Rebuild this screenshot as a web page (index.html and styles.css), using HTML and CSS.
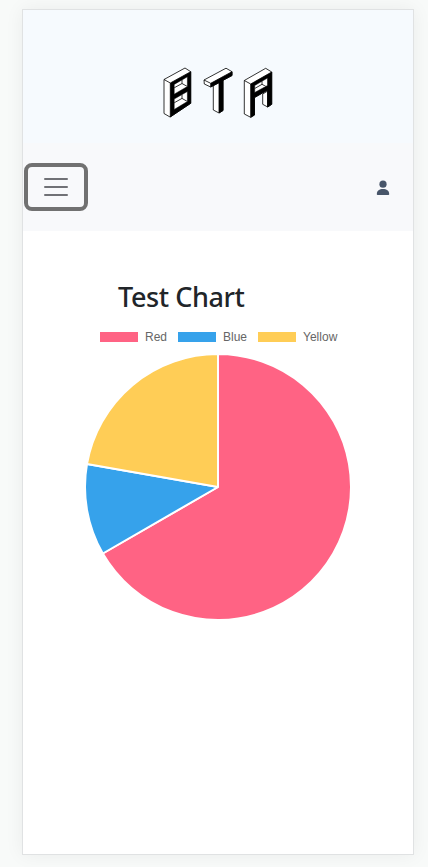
FILE: index.html
```html
<!DOCTYPE html>
<html lang="en">
<head>
<meta charset="utf-8">
<title>Test Chart</title>
<link rel="stylesheet" href="styles.css">
</head>
<body>
<div class="page">
  <header class="brand">
    <svg class="logo" viewBox="162 66 112 54" role="img" aria-label="BTA">
      <g class="edge">
        <path d="M164 79.5 185 68 190.7 71.7V103.3L170 117 164 113.5Z"/>
        <path d="M164 79.5 170.3 83"/>
        <path class="face" d="M170.3 83 190.7 71.7V103.3L170.3 117Z"/>
        <path class="hole" d="M174.2 84.4 187.4 76.8V86.5L174.2 94.2ZM174.2 99 187.4 91.5V101.5L174.2 109.5Z"/>
        <path d="M174.2 87.8 182 83.5 187.4 86.5M182 79.9V83.5M174.2 102.8 182 98.4 187.4 101.5M182 94.6V98.4"/>
        <path d="M213.3 83V110L219 113 223 110.5V79Z"/>
        <path d="M204 80 226 68.2 232 71.7V75.5L210.7 87 204.3 84Z"/>
        <path d="M204 80 210.7 83.3"/>
        <path class="face" d="M210.7 83.3 232 71.7V75.5L223 80.3V110.5L219 113V82.8L210.7 87Z"/>
        <path d="M262.7 94V104.3L267.7 107V91Z"/>
        <path d="M244.3 80.5 265.7 68.3 271.7 72V104.3L267.7 107V90L254.5 97.5V115L250.7 117.3 244.3 114Z"/>
        <path d="M244.3 80.5 250.7 84"/>
        <path class="face" d="M250.7 84 271.7 72V104.3L267.7 107V90L254.5 97.5V115L250.7 117.3Z"/>
        <path class="hole" d="M254.7 85.5 267.5 78V85.5L254.7 92.5Z"/>
        <path d="M254.7 88.5 262 84.3 266 86.5M262 81.2V84.3"/>
      </g>
    </svg>
  </header>
  <nav class="bar">
    <button class="toggle" aria-label="Menu"><span></span><span></span><span></span></button>
    <svg class="user" viewBox="0 0 14 15"><circle cx="7" cy="4.2" r="3.6"/><path d="M1.6 15Q.8 15 .8 14.2C.8 10.6 3.4 9 7 9S13.2 10.6 13.2 14.2Q13.2 15 12.4 15Z"/></svg>
  </nav>
  <main class="content">
    <h1 class="title">Test Chart</h1>
    <div class="legend">
      <span class="key"><i class="swatch red"></i>Red</span>
      <span class="key"><i class="swatch blue"></i>Blue</span>
      <span class="key"><i class="swatch yellow"></i>Yellow</span>
    </div>
    <svg class="pie" viewBox="-133 -133 266 266">
      <path class="red" d="M0 0V-133A133 133 0 1 1-115.18 66.5Z"/>
      <path class="blue" d="M0 0-115.18 66.5A133 133 0 0 1-130.98-23.1Z"/>
      <path class="yellow" d="M0 0-130.98-23.1A133 133 0 0 1 0-133Z"/>
    </svg>
  </main>
</div>
</body>
</html>
```
FILE: styles.css
```css
* { box-sizing: border-box; }
body {
  margin: 0;
  height: 867px;
  padding: 9px 14px 12px 22px;
  background: #f8faf9;
  overflow: hidden;
}
.page {
  height: 846px;
  border: 1px solid #e0e2e3;
  background: #fff;
  box-shadow: 0 0 18px rgba(0, 0, 0, .06);
}
.brand {
  height: 133px;
  padding: 56px 0 0 139px;
  background: #f6fafe;
}
.logo { display: block; width: 112px; height: 54px; }
.edge { fill: #fff; stroke: #000; stroke-width: .8; stroke-linejoin: round; }
.edge .face { fill: #000; }
.edge .hole { fill: #fff; stroke-width: .5; }
.bar {
  height: 88px;
  padding: 0 23px 0 1px;
  display: flex;
  align-items: center;
  justify-content: space-between;
  background: #f8f9fb;
}
.toggle {
  width: 64px;
  height: 48px;
  padding: 0;
  border: 4px solid #717171;
  border-radius: 8px;
  background: transparent;
  display: flex;
  flex-direction: column;
  align-items: center;
  justify-content: center;
  gap: 6px;
}
.toggle span { width: 24px; height: 2px; border-radius: 1px; background: #707176; }
.user { width: 14px; height: 15px; fill: #475569; }
.content { padding-top: 49px; }
.title {
  margin: 0 0 0 95px;
  font: 500 27px/34px "Noto Sans", sans-serif;
  letter-spacing: -.4px;
  color: #212529;
}
.legend {
  display: flex;
  gap: 11px;
  height: 14px;
  margin: 16px 0 0 77px;
  font: 12px/14px "Liberation Sans", Arial, sans-serif;
  color: #666;
}
.key { display: flex; align-items: center; gap: 7px; }
.swatch { width: 38px; height: 10px; }
.pie { display: block; width: 266px; height: 266px; margin: 10px 0 0 62px; }
.pie path { stroke: #fff; stroke-width: 2; stroke-linejoin: bevel; }
.red { background: #ff6384; fill: #ff6384; }
.blue { background: #36a2eb; fill: #36a2eb; }
.yellow { background: #ffcd56; fill: #ffcd56; }
```
